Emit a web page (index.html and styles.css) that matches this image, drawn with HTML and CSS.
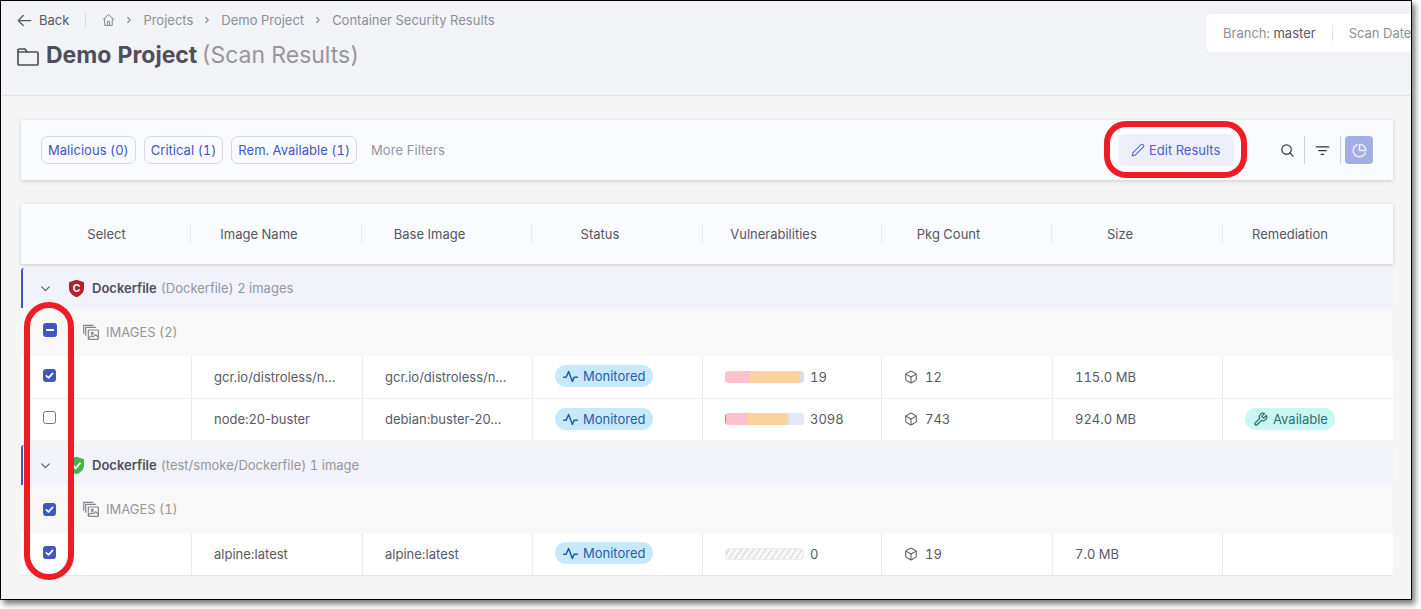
FILE: index.html
```html
<!DOCTYPE html>
<html lang="en">
<head>
    <meta charset="UTF-8">
    <title>Demo Project - Scan Results</title>
    <link rel="stylesheet" href="styles.css">
</head>
<body>
    <svg class="sprite" width="0" height="0">
        <symbol id="i-home" viewBox="0 0 24 24"><path d="M2 11l10-9 10 9"/><path d="M5 9v13h14V9"/><path d="M10 22v-7h4v7"/></symbol>
        <symbol id="i-chevron" viewBox="0 0 24 24"><polyline points="9 6 15 12 9 18"/></symbol>
        <symbol id="i-down" viewBox="0 0 24 24"><polyline points="5 9 12 16 19 9"/></symbol>
        <symbol id="i-activity" viewBox="0 0 24 24"><polyline points="23 13 18 13 15 20 9 4 5 13 1 13"/></symbol>
        <symbol id="i-box" viewBox="0 0 24 24"><path d="M21 16V8a2 2 0 0 0-1-1.730l-7-4a2 2 0 0 0-2 0l-7 4A2 2 0 0 0 3 8v8a2 2 0 0 0 1 1.730l7 4a2 2 0 0 0 2 0l7-4A2 2 0 0 0 21 16z"/><polyline points="3.300 7 12 12 20.700 7"/><line x1="12" y1="22" x2="12" y2="12"/></symbol>
        <symbol id="i-images" viewBox="0 0 24 24"><path d="M1 14V2h14"/><path d="M4 17V5h15"/><rect x="8" y="9" width="15" height="14" rx="1"/><circle cx="14" cy="14" r="1.500"/><path d="M8 21l5-3 3 1 3-3 4 4"/></symbol>
        <symbol id="i-check" viewBox="0 0 14 14"><polyline points="3 7.400 5.800 10 11 4.200"/></symbol>
        <symbol id="i-shield" viewBox="0 0 24 24"><path d="M12 1l9.500 3.200v7.300c0 5.500-4 9.500-9.500 11.500-5.500-2-9.500-6-9.500-11.500V4.200z"/></symbol>
    </svg>

    <div class="frame">
        <header class="page-head">
            <div class="head-left">
                <nav class="crumbs">
                    <a class="back">
                        <svg class="icon back-icon" viewBox="0 0 24 24"><line x1="22" y1="12" x2="3" y2="12"/><polyline points="10 4 2 12 10 20"/></svg>
                        Back
                    </a>
                    <span class="crumb-sep"></span>
                    <svg class="icon home-icon"><use href="#i-home"/></svg>
                    <svg class="icon crumb-arrow"><use href="#i-chevron"/></svg>
                    <span>Projects</span>
                    <svg class="icon crumb-arrow"><use href="#i-chevron"/></svg>
                    <span>Demo Project</span>
                    <svg class="icon crumb-arrow"><use href="#i-chevron"/></svg>
                    <span>Container Security Results</span>
                </nav>
                <h1 class="title">
                    <svg class="icon folder-icon" viewBox="0 0 24 24"><path d="M2 6a1 1 0 0 1 1-1h6l2 3h10a1 1 0 0 1 1 1v11a1 1 0 0 1-1 1H3a1 1 0 0 1-1-1z"/><line x1="2" y1="8" x2="11" y2="8"/></svg>
                    <span>Demo Project <span class="title-sub">(Scan Results)</span></span>
                </h1>
            </div>
            <div class="scan-meta">
                <span class="meta-item">Branch: <b>master</b></span>
                <span class="meta-item">Scan Date: 2024</span>
            </div>
        </header>

        <main class="content">
            <section class="filters">
                <button class="chip">Malicious (0)</button>
                <button class="chip">Critical (1)</button>
                <button class="chip">Rem. Available (1)</button>
                <span class="more-filters">More Filters</span>
                <button class="edit-btn">
                    <svg class="icon edit-icon" viewBox="0 0 24 24"><path d="M17 3a2.828 2.828 0 1 1 4 4L7.500 20.500 2 22l1.500-5.500L17 3z"/></svg>
                    Edit Results
                </button>
                <div class="tools">
                    <span class="tool">
                        <svg class="icon tool-icon" viewBox="0 0 24 24"><circle cx="10.500" cy="10.500" r="7.500"/><line x1="21" y1="21" x2="16" y2="16"/></svg>
                    </span>
                    <span class="tool tool-line">
                        <svg class="icon tool-icon" viewBox="0 0 24 24"><line x1="2" y1="6" x2="22" y2="6"/><line x1="6" y1="12" x2="18" y2="12"/><line x1="10" y1="18" x2="14" y2="18"/></svg>
                    </span>
                    <span class="tool-active">
                        <svg class="icon pie-icon" viewBox="0 0 24 24"><path d="M21.210 15.890A10 10 0 1 1 8 2.830"/><path d="M22 12A10 10 0 0 0 12 2v10z"/></svg>
                    </span>
                </div>
            </section>

            <div class="table-head">
                <div class="th th-select">Select</div>
                <div class="th">Image Name</div>
                <div class="th">Base Image</div>
                <div class="th">Status</div>
                <div class="th th-vuln">Vulnerabilities</div>
                <div class="th th-pkg">Pkg Count</div>
                <div class="th">Size</div>
                <div class="th th-last">Remediation</div>
            </div>

            <section class="group">
                <div class="group-title">
                    <svg class="icon caret"><use href="#i-down"/></svg>
                    <svg class="shield shield-red" viewBox="0 0 24 24">
                        <use href="#i-shield"/>
                        <text x="12" y="16.500" text-anchor="middle">C</text>
                    </svg>
                    <b>Dockerfile</b>
                    <span class="group-sub">(Dockerfile) 2 images</span>
                </div>
                <div class="images-row">
                    <span class="check check-mixed"><i></i></span>
                    <svg class="icon images-icon"><use href="#i-images"/></svg>
                    IMAGES (2)
                </div>
                <div class="row cols">
                    <div class="td td-select"><span class="check check-on"><svg><use href="#i-check"/></svg></span></div>
                    <div class="td td-name">gcr.io/distroless/n...</div>
                    <div class="td td-name">gcr.io/distroless/n...</div>
                    <div class="td"><span class="pill pill-blue"><svg class="icon pill-icon"><use href="#i-activity"/></svg>Monitored</span></div>
                    <div class="td">
                        <div class="bar">
                            <span class="seg seg-pink" style="width:25px"></span>
                            <span class="seg seg-orange" style="width:50px"></span>
                            <span class="seg seg-grey" style="width:4px"></span>
                        </div>
                        <span class="bar-num">19</span>
                    </div>
                    <div class="td"><svg class="icon box-icon"><use href="#i-box"/></svg>12</div>
                    <div class="td">115.0 MB</div>
                    <div class="td"></div>
                </div>
                <div class="row row-last cols">
                    <div class="td td-select"><span class="check"></span></div>
                    <div class="td td-name">node:20-buster</div>
                    <div class="td td-name">debian:buster-20...</div>
                    <div class="td"><span class="pill pill-blue"><svg class="icon pill-icon"><use href="#i-activity"/></svg>Monitored</span></div>
                    <div class="td">
                        <div class="bar">
                            <span class="seg seg-red" style="width:1px"></span>
                            <span class="seg seg-pink" style="width:22px"></span>
                            <span class="seg seg-orange" style="width:39px"></span>
                            <span class="seg seg-grey" style="width:2px"></span>
                            <span class="seg seg-light" style="width:15px"></span>
                        </div>
                        <span class="bar-num">3098</span>
                    </div>
                    <div class="td"><svg class="icon box-icon"><use href="#i-box"/></svg>743</div>
                    <div class="td">924.0 MB</div>
                    <div class="td"><span class="pill pill-teal"><svg class="icon pill-icon" viewBox="0 0 24 24"><path d="M14.700 6.300a1 1 0 0 0 0 1.400l1.600 1.600a1 1 0 0 0 1.400 0l3.770-3.770a6 6 0 0 1-7.940 7.940l-6.910 6.910a2.120 2.120 0 0 1-3-3l6.910-6.910a6 6 0 0 1 7.940-7.940l-3.760 3.760z"/></svg>Available</span></div>
                </div>
            </section>

            <section class="group group-two">
                <div class="group-title">
                    <svg class="icon caret"><use href="#i-down"/></svg>
                    <svg class="shield shield-green" viewBox="0 0 24 24">
                        <use href="#i-shield"/>
                        <polyline points="7.500 12 11 15.500 17 8.500"/>
                    </svg>
                    <b>Dockerfile</b>
                    <span class="group-sub">(test/smoke/Dockerfile) 1 image</span>
                </div>
                <div class="images-row">
                    <span class="check check-on"><svg><use href="#i-check"/></svg></span>
                    <svg class="icon images-icon"><use href="#i-images"/></svg>
                    IMAGES (1)
                </div>
                <div class="row row-end cols">
                    <div class="td td-select"><span class="check check-on"><svg><use href="#i-check"/></svg></span></div>
                    <div class="td td-name">alpine:latest</div>
                    <div class="td td-name">alpine:latest</div>
                    <div class="td"><span class="pill pill-blue"><svg class="icon pill-icon"><use href="#i-activity"/></svg>Monitored</span></div>
                    <div class="td">
                        <div class="bar bar-empty"></div>
                        <span class="bar-num">0</span>
                    </div>
                    <div class="td"><svg class="icon box-icon"><use href="#i-box"/></svg>19</div>
                    <div class="td">7.0 MB</div>
                    <div class="td"></div>
                </div>
            </section>
        </main>

        <!-- red callouts drawn over the screen -->
        <div class="callout callout-edit"></div>
        <div class="callout callout-select"></div>
    </div>
</body>
</html>
```

FILE: styles.css
```css
* {
    box-sizing: border-box;
}
html, body {
    margin: 0;
    height: 100%;
    overflow: hidden;
    background-color: #fff;
}
body {
    font-family: Inter, "Liberation Sans", sans-serif;
    font-size: 13px;
    font-variant-numeric: tabular-nums;
    color: #5a5a64;
}
.sprite {
    display: block;
    height: 0;
}
.icon {
    fill: none;
    stroke: currentColor;
    stroke-width: 2;
    stroke-linecap: round;
    stroke-linejoin: round;
    flex: none;
}
.frame {
    position: relative;
    width: 1412px;
    height: 600px;
    border: 1px solid #000;
    box-shadow: 3px 4px 6px rgba(0, 0, 0, 0.55);
    background-color: #f5f5f5;
    overflow: hidden;
}

/* page header */
.page-head {
    display: flex;
    height: 95px;
    padding: 12px 0 0 16px;
    background-color: #f2f3f7;
    border-bottom: 1px solid #e1e3ec;
}
.head-left {
    flex: 0 0 1190px;
}
.crumbs {
    display: flex;
    align-items: center;
    height: 16px;
    color: #8f8f96;
    margin-top: -1px;
}
.back {
    display: flex;
    align-items: center;
    color: #5a5a64;
}
.back-icon {
    width: 15px;
    height: 15px;
    margin-right: 7px;
}
.crumb-sep {
    width: 1px;
    height: 16px;
    background-color: #d9dae0;
    margin: 0 16px;
}
.home-icon {
    width: 13px;
    height: 14px;
    stroke-width: 1.800;
    color: #85858c;
}
.crumb-arrow {
    width: 10px;
    height: 10px;
    stroke-width: 3;
    margin: 0 9px;
    color: #8f8f96;
}
.title {
    display: flex;
    align-items: center;
    margin: 13px 0 0;
    font-size: 23px;
    font-weight: 700;
    line-height: 29px;
    color: #4f4f59;
}
.title-sub {
    margin-left: -2px;
    font-weight: 400;
    color: #96969c;
}
.folder-icon {
    width: 24px;
    height: 24px;
    margin: 0 6px 0 -1px;
    stroke-width: 1.700;
}
.scan-meta {
    display: flex;
    flex: none;
    align-items: center;
    height: 38px;
    margin-top: 1px;
    padding: 0 16px;
    background-color: #fff;
    border-radius: 4px 0 0 4px;
    color: #8f8f96;
    white-space: nowrap;
}
.meta-item + .meta-item {
    margin-left: 16px;
    padding-left: 16px;
    border-left: 1px solid #e6e6ea;
}
.scan-meta b {
    font-weight: 400;
    color: #5a5a64;
}

/* filter bar */
.content {
    padding: 24px 18px 0 20px;
}
.filters {
    display: flex;
    align-items: center;
    height: 60px;
    padding: 0 20px;
    background-color: #fafbfe;
    box-shadow: 0 1px 4px rgba(0, 0, 0, 0.18);
}
.chip {
    height: 28px;
    padding: 0 6px;
    margin-right: 8px;
    font: inherit;
    font-variant-numeric: tabular-nums;
    letter-spacing: 0.03px;
    color: #3f56c4;
    background-color: transparent;
    border: 1px solid #d3d7f3;
    border-radius: 7px;
}
.more-filters {
    margin-left: 6px;
    letter-spacing: 0.08px;
    color: #96969c;
}
.edit-btn {
    display: flex;
    align-items: center;
    height: 32px;
    width: 115px;
    margin-left: auto;
    padding: 0 12px;
    font: inherit;
    color: #4c62cf;
    background-color: #eceefa;
    border: none;
    border-radius: 5px;
}
.edit-icon {
    width: 14px;
    height: 14px;
    margin-right: 4px;
    stroke-width: 1.800;
}
.tools {
    display: flex;
    align-items: center;
    margin-left: 36px;
}
.tool {
    display: flex;
    align-items: center;
    justify-content: center;
    width: 35px;
    height: 28px;
    color: #333;
    border-right: 1px solid #cfd0d4;
}
.tool-line {
    width: 36px;
}
.tool-icon {
    width: 15px;
    height: 15px;
}
.tool-active {
    display: flex;
    align-items: center;
    justify-content: center;
    width: 28px;
    height: 28px;
    margin-left: 4px;
    color: #eef0fb;
    background-color: #a3ade6;
    border-radius: 4px;
}
.pie-icon {
    width: 15px;
    height: 15px;
    stroke-width: 2.400;
}

/* table */
.cols {
    display: grid;
    grid-template-columns: 170px 171px 170px 170px 179px 171px 170px 171px;
}
.table-head {
    display: grid;
    grid-template-columns: 170px 171px 170px 171px 179px 170px 171px 170px;
    height: 60px;
    margin-top: 24px;
    background-color: #fafbfe;
    box-shadow: 0 1px 4px rgba(0, 0, 0, 0.18);
}
.th {
    align-self: center;
    height: 20px;
    line-height: 20px;
    padding-right: 34px;
    text-align: center;
    color: #55555e;
    border-right: 1px solid #e8e8ec;
}
.th-select {
    padding-left: 2px;
    padding-right: 0;
}
.th-vuln {
    padding-right: 37px;
}
.th-pkg {
    padding-right: 36px;
}
.th-last {
    padding-right: 36px;
    border-right: none;
}
.group {
    margin-top: 4px;
}
.group-two {
    margin-top: 5px;
}
.group-title {
    display: flex;
    align-items: center;
    height: 40px;
    padding-left: 16px;
    background-color: #f1f2fa;
    border-left: 2px solid #3f56c4;
    border-top-left-radius: 3px;
    white-space: pre;
}
.group-title b {
    font-weight: 600;
    color: #4f4f59;
}
.group-sub {
    margin-left: 4px;
    color: #96969c;
}
.caret {
    width: 13px;
    height: 13px;
    color: #555;
    margin-right: 15px;
}
.shield {
    width: 19px;
    height: 19px;
    margin-right: 6px;
    flex: none;
}
.shield-red {
    fill: #b3202c;
}
.shield-red text {
    font: 700 13px Inter, "Liberation Sans", sans-serif;
    fill: #fff;
}
.shield-green {
    fill: #3fb54a;
}
.shield-green polyline {
    fill: none;
    stroke: #fff;
    stroke-width: 2.500;
}
.images-row {
    display: flex;
    align-items: center;
    height: 48px;
    padding-left: 22px;
    background-color: #f8f8f8;
    color: #96969c;
}
.images-icon {
    width: 16px;
    height: 16px;
    margin: 0 7px 0 27px;
    stroke-width: 1.800;
    color: #85858c;
}
.row {
    height: 43px;
    background-color: #fff;
    border-bottom: 1px solid #f0f0f2;
}
.row-last {
    height: 41px;
    border-bottom: none;
}
.row-end {
    height: 43px;
    border-bottom: 1px solid #e6e6e8;
}
.td {
    display: flex;
    align-items: center;
    padding-left: 22px;
    color: #5a5a64;
    border-left: 1px solid #ececee;
    white-space: nowrap;
}
.td-name {
    font-variant-numeric: normal;
}
.row-last .td {
    padding-bottom: 1px;
}
.td-select {
    border-left: none;
}
.td .check {
    margin-bottom: 4px;
}
.td .pill {
    margin-bottom: 2px;
}
.row-last .td .pill {
    margin-bottom: 0;
}

/* checkboxes */
.check {
    display: inline-flex;
    align-items: center;
    justify-content: center;
    flex: none;
    width: 13px;
    height: 13px;
    background-color: #fff;
    border: 1px solid #77777f;
    border-radius: 2.500px;
}
.check-on, .check-mixed {
    background-color: #3f56c4;
    border-color: #3f56c4;
}
.check svg {
    width: 11px;
    height: 11px;
    fill: none;
    stroke: #fff;
    stroke-width: 2.200;
    stroke-linecap: round;
    stroke-linejoin: round;
}
.check-mixed {
    width: 14px;
    height: 14px;
    margin: 0 -1px 4px 0;
}
.check-mixed i {
    width: 8px;
    height: 2px;
    background-color: #fff;
}

/* pills */
.pill {
    display: inline-flex;
    align-items: center;
    height: 22px;
    padding: 0 8px;
    border-radius: 11px;
}
.pill-blue {
    width: 98px;
    color: #1f5fa8;
    background-color: #c8e9fd;
}
.pill-blue .pill-icon {
    stroke-width: 2.400;
}
.pill-teal {
    width: 90px;
    color: #2f6f70;
    background-color: #c9f7f2;
}
.pill-icon {
    width: 15px;
    height: 15px;
    margin-right: 5px;
    stroke-width: 2;
}

/* vulnerability bars */
.bar {
    display: flex;
    width: 79px;
    height: 12px;
    border-radius: 4px;
    overflow: hidden;
    background-color: #e8ebf6;
}
.seg {
    display: block;
}
.seg-red {
    background-color: #d97a85;
}
.seg-pink {
    background-color: #fdc1ce;
}
.seg-orange {
    background-color: #fcd39e;
}
.seg-grey {
    background-color: #dcdde2;
}
.seg-light {
    background-color: #e5e9f7;
}
.bar-empty {
    background-color: #f6f6f6;
    background-image: repeating-linear-gradient(-55deg, #e4e4e6 0, #e4e4e6 2px, #f8f8f8 2px, #f8f8f8 5px);
    border: 1px solid #ececee;
}
.bar-num {
    margin-left: 6px;
}
.box-icon {
    width: 14px;
    height: 14px;
    margin-right: 7px;
    stroke-width: 1.800;
}

/* red highlights over the screenshot */
.callout {
    position: absolute;
    border-style: solid;
    border-color: #ef1c25;
}
.callout-edit {
    left: 1103px;
    top: 120px;
    width: 143px;
    height: 57px;
    border-width: 6px;
    border-radius: 22px;
}
.callout-select {
    left: 23px;
    top: 301px;
    width: 50px;
    height: 278px;
    border-width: 6px;
    border-radius: 25px;
}
```
